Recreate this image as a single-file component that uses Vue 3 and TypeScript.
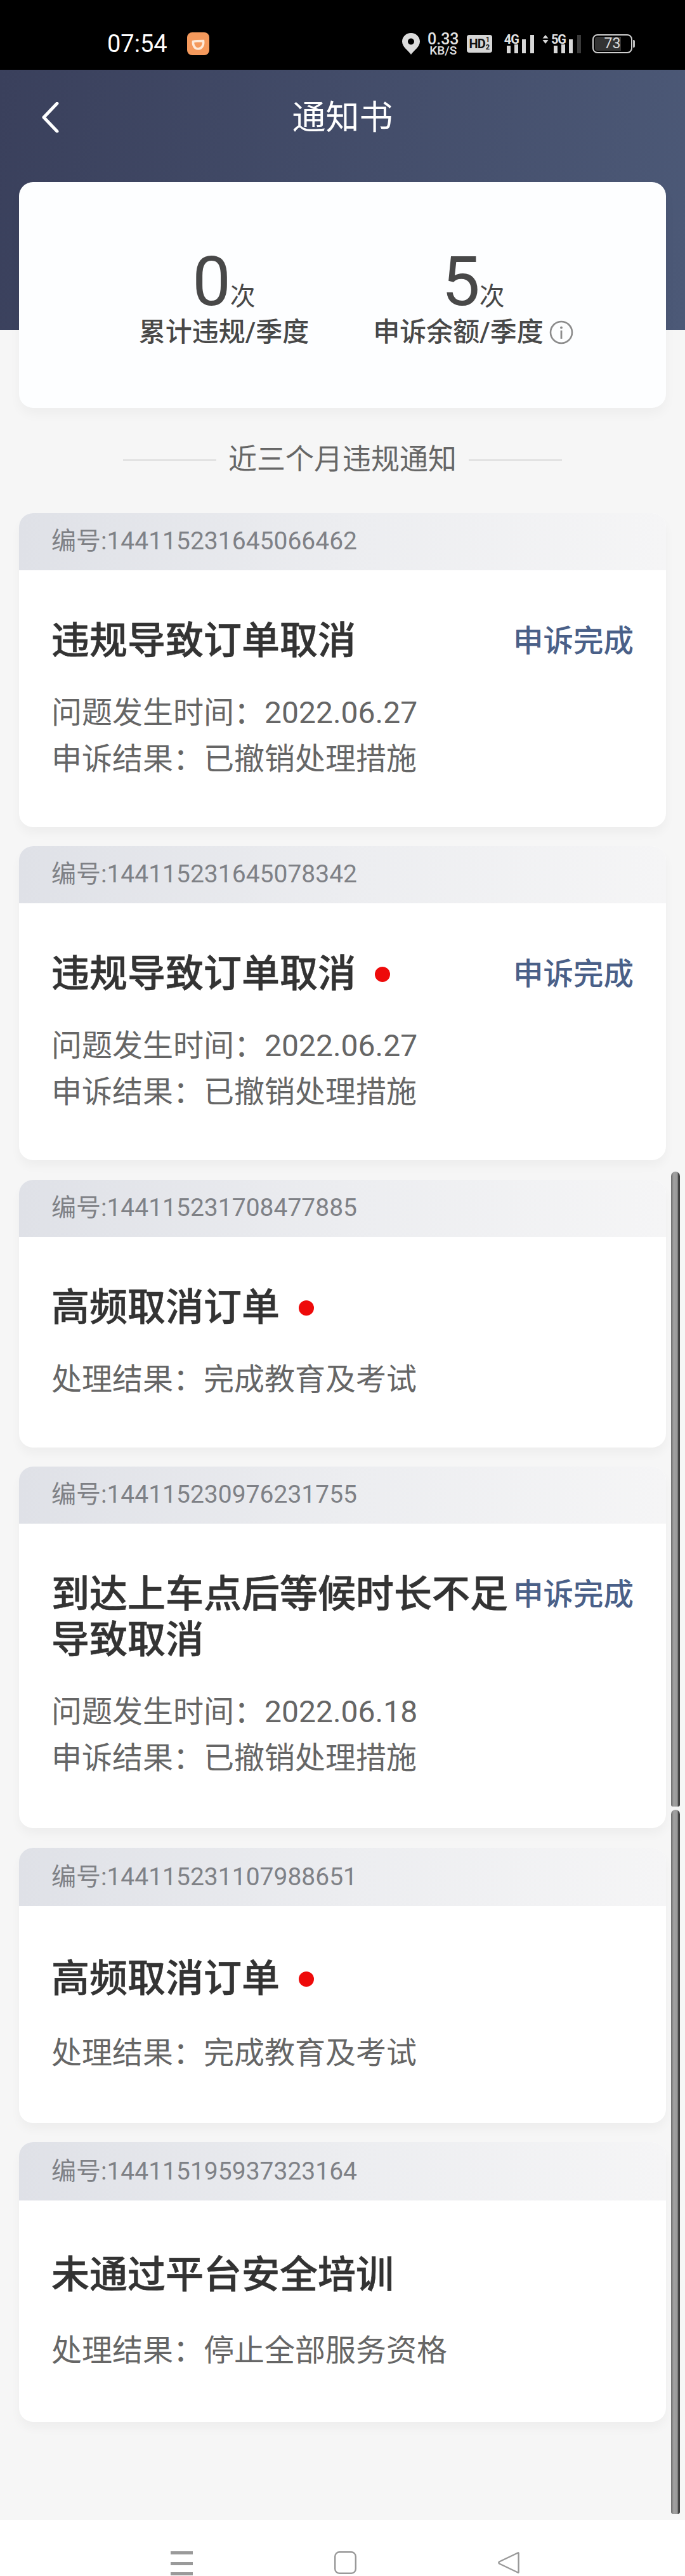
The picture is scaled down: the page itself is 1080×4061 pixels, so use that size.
<script setup lang="ts">
interface Notice {
  id: string
  title: string
  dot?: boolean
  status?: string
  lines: string[]
  variant?: string
}

const notices: Notice[] = [
  { id: '144115231645066462', title: '违规导致订单取消', status: '申诉完成', lines: ['问题发生时间：2022.06.27', '申诉结果：已撤销处理措施'] },
  { id: '144115231645078342', title: '违规导致订单取消', dot: true, status: '申诉完成', lines: ['问题发生时间：2022.06.27', '申诉结果：已撤销处理措施'] },
  { id: '144115231708477885', title: '高频取消订单', dot: true, lines: ['处理结果：完成教育及考试'] },
  { id: '144115230976231755', title: '到达上车点后等候时长不足导致取消', status: '申诉完成', lines: ['问题发生时间：2022.06.18', '申诉结果：已撤销处理措施'], variant: 'wrap' },
  { id: '144115231107988651', title: '高频取消订单', dot: true, lines: ['处理结果：完成教育及考试'], variant: 'loose' },
  { id: '144115195937323164', title: '未通过平台安全培训', lines: ['处理结果：停止全部服务资格'], variant: 'looser' },
]
</script>

<template>
  <div class="screen">
    <div class="statusbar">
      <span class="time">07:54</span>
      <svg class="app" viewBox="0 0 35 36">
        <rect width="35" height="36" rx="8" fill="#f4995c" />
        <path d="M9.5 14.5C14 13.5 21 13.5 25.5 13.5C26.5 20 23 26 17.5 26C12 26 8.8 20.5 9.5 14.5Z" fill="none" stroke="#fde9d8" stroke-width="3.6" />
      </svg>
      <div class="indicators">
        <svg class="pin" viewBox="0 0 28 34">
          <path fill-rule="evenodd" d="M14 34C10 28 0 22 0 13.5C0 6 6.2 0 14 0S28 6 28 13.5C28 22 18 28 14 34ZM14 8.5A5 5 0 1 0 14 18.5A5 5 0 1 0 14 8.5Z" fill="#dcdcdc" />
        </svg>
        <div class="speed">
          <span class="speed-num">0.33</span>
          <span class="speed-unit">KB/S</span>
        </div>
        <div class="hd">
          <span class="hd-label">HD</span>
          <span class="hd-sims"><i>1</i><i>2</i></span>
        </div>
        <div class="signal first">
          <span class="net">4G</span>
          <svg class="bars" viewBox="0 0 44 30">
            <rect x="0" y="18" width="6" height="12" fill="#d8d8d8" />
            <rect x="12" y="16" width="6" height="14" fill="#d8d8d8" />
            <rect x="24" y="8" width="6" height="22" fill="#d8d8d8" />
            <rect x="37" y="1" width="6" height="29" fill="#d8d8d8" />
          </svg>
        </div>
        <div class="signal second">
          <svg class="arrows" viewBox="0 0 10 14">
            <path d="M5 0L9.5 5.5H.5ZM5 14L.5 8H9.5Z" fill="#d8d8d8" />
          </svg>
          <span class="net">5G</span>
          <svg class="bars" viewBox="0 0 44 30">
            <rect x="0" y="18" width="6" height="12" fill="#d8d8d8" />
            <rect x="12" y="16" width="6" height="14" fill="#d8d8d8" />
            <rect x="24" y="8" width="6" height="22" fill="#d8d8d8" />
            <rect x="37" y="1" width="6" height="29" fill="#3a3a3a" />
          </svg>
        </div>
        <div class="battery">
          <span class="battery-level">73</span>
        </div>
        <span class="battery-nub"></span>
      </div>
    </div>

    <header class="hero">
      <div class="nav">
        <svg class="back" viewBox="0 0 28 48">
          <path d="M25 2L4 24L25 46" fill="none" stroke="#fff" stroke-width="5" stroke-linecap="round" stroke-linejoin="round" />
        </svg>
        <span class="nav-title">通知书</span>
      </div>
    </header>

    <main class="content">
      <section class="stats">
        <div class="stat">
          <div class="value"><span class="num">0</span><span class="unit">次</span></div>
          <div class="label">累计违规/季度</div>
        </div>
        <div class="stat second-stat">
          <div class="value"><span class="num">5</span><span class="unit">次</span></div>
          <div class="label">
            申诉余额/季度
            <svg class="info" viewBox="0 0 38 38">
              <circle cx="19" cy="19" r="17" fill="none" stroke="#8c8c8c" stroke-width="2.6" />
              <circle cx="19" cy="11.5" r="2" fill="#8c8c8c" />
              <rect x="17.6" y="16" width="2.8" height="13" fill="#8c8c8c" />
            </svg>
          </div>
        </div>
      </section>

      <div class="divider">
        <span class="rule"></span>
        <span class="divider-text">近三个月违规通知</span>
        <span class="rule"></span>
      </div>

      <div class="list">
        <article v-for="n in notices" :key="n.id" class="card" :class="n.variant">
          <div class="card-head">编号:{{ n.id }}</div>
          <div class="card-body">
            <div class="title-row">
              <h2 class="title">{{ n.title }}<i v-if="n.dot" class="dot"></i></h2>
              <span v-if="n.status" class="status">{{ n.status }}</span>
            </div>
            <p v-for="line in n.lines" :key="line" class="line">{{ line }}</p>
          </div>
        </article>
      </div>
    </main>

    <footer class="sysnav">
      <svg class="nav-menu" viewBox="0 0 35 40">
        <rect y="0" width="35" height="5" fill="#9a9a9a" />
        <rect y="17" width="35" height="5" fill="#9a9a9a" />
        <rect y="33" width="35" height="5" fill="#9a9a9a" />
      </svg>
      <svg class="nav-home" viewBox="0 0 35 36">
        <rect x="1.2" y="1.2" width="32.6" height="33.6" rx="7" fill="none" stroke="#999" stroke-width="2.4" />
      </svg>
      <svg class="nav-return" viewBox="0 0 34 36">
        <path d="M31.5 2.5C32 2 32.6 2.2 32.6 3V33C32.6 33.8 32 34 31.5 33.5L2.2 19.5C1 18.6 1 17.4 2.2 16.5Z" fill="none" stroke="#999" stroke-width="2.4" stroke-linejoin="round" />
      </svg>
    </footer>

    <span class="scroll scroll-a"></span>
    <span class="scroll scroll-b"></span>
  </div>
</template>

<style>
html,
body {
  margin: 0;
  background: #f6f6f6;
}
</style>

<style scoped>
.screen {
  position: relative;
  display: flex;
  flex-direction: column;
  width: 1080px;
  height: 4061px;
  overflow: hidden;
  background: #f6f6f6;
  font-family: Roboto, "Noto Sans CJK SC", sans-serif;
}

.statusbar {
  display: flex;
  align-items: center;
  flex: none;
  height: 110px;
  box-sizing: border-box;
  padding: 0 79px 0 169px;
  background: #000;
  color: #fff;
}
.time {
  font-size: 38px;
  line-height: 40px;
  margin-top: 28px;
}
.app {
  width: 35px;
  height: 36px;
  margin: 28px 0 0 31px;
}
.indicators {
  display: flex;
  align-items: center;
  height: 34px;
  margin: 28px 0 0 auto;
  color: #e2e2e2;
}
.pin {
  width: 28px;
  height: 34px;
}
.speed {
  display: flex;
  flex-direction: column;
  align-items: center;
  width: 48px;
  margin-left: 13px;
}
.speed-num {
  font-size: 25px;
  line-height: 21px;
  font-weight: 500;
  white-space: nowrap;
}
.speed-unit {
  font-size: 19px;
  line-height: 16px;
  font-weight: 500;
  white-space: nowrap;
}
.hd {
  display: flex;
  align-items: center;
  justify-content: center;
  width: 40px;
  height: 28px;
  margin-left: 13px;
  border-radius: 4px;
  background: #d6d6d6;
  color: #111;
}
.hd-label {
  font-size: 20px;
  font-weight: 700;
  letter-spacing: -1px;
  line-height: 28px;
}
.hd-sims {
  display: flex;
  flex-direction: column;
  margin-left: 1px;
}
.hd-sims i {
  font-style: normal;
  font-size: 11px;
  font-weight: 700;
  line-height: 12px;
}
.signal {
  position: relative;
  display: flex;
  align-items: flex-start;
  height: 30px;
}
.signal.first {
  margin-left: 19px;
}
.signal.second {
  margin-left: 12px;
}
.net {
  font-size: 20px;
  line-height: 16px;
  font-weight: 700;
  letter-spacing: -1px;
}
.arrows {
  width: 10px;
  height: 14px;
  margin: 1px 4px 0 0;
}
.bars {
  width: 44px;
  height: 30px;
  margin-left: -19px;
}
.battery {
  display: flex;
  align-items: center;
  justify-content: center;
  box-sizing: border-box;
  width: 63px;
  height: 30px;
  margin-left: 17px;
  border: 2px solid #cfcfcf;
  border-radius: 8px;
  background: linear-gradient(90deg, #333 0 73%, #000 73%);
  background-clip: content-box;
  padding: 2px;
}
.battery-level {
  font-size: 23px;
  line-height: 24px;
  color: #dcdcdc;
}
.battery-nub {
  width: 3px;
  height: 12px;
  margin-left: 1px;
  border-radius: 0 2px 2px 0;
  background: #bdbdbd;
}

.hero {
  flex: none;
  height: 410px;
  background: linear-gradient(100deg, #3a405c 0%, #4c5977 100%);
}
.nav {
  display: flex;
  align-items: center;
  justify-content: center;
  position: relative;
  height: 152px;
}
.back {
  position: absolute;
  left: 65px;
  top: 51px;
  width: 28px;
  height: 48px;
}
.nav-title {
  font-size: 53px;
  line-height: 60px;
  color: #fff;
}

.content {
  flex: 1;
  min-height: 0;
  box-sizing: border-box;
  padding: 0 30px;
}
.stats {
  position: relative;
  display: flex;
  align-items: flex-start;
  gap: 105px;
  box-sizing: border-box;
  height: 356px;
  margin-top: -233px;
  padding: 102px 0 0 190px;
  border-radius: 22px;
  background: #fdfeff;
  box-shadow: 0 10px 18px rgba(0, 0, 0, 0.035);
}
.stat {
  display: flex;
  flex-direction: column;
  align-items: center;
  width: 266px;
}
.second-stat {
  width: 310px;
}
.value {
  display: flex;
  align-items: baseline;
  height: 110px;
  color: #484848;
}
.num {
  font-size: 108px;
  line-height: 110px;
}
.unit {
  font-size: 40px;
  line-height: 110px;
  margin-left: -1px;
}
.label {
  display: flex;
  align-items: center;
  font-size: 42px;
  line-height: 50px;
  font-weight: 500;
  color: #484848;
  white-space: nowrap;
}
.info {
  width: 38px;
  height: 38px;
  margin-left: 9px;
}

.divider {
  display: flex;
  align-items: center;
  justify-content: center;
  gap: 19px;
  height: 60px;
  margin-top: 52px;
}
.divider-text {
  font-size: 45px;
  line-height: 60px;
  color: #666;
}
.rule {
  width: 147px;
  height: 3px;
  background: #e2e2e2;
}

.list {
  display: flex;
  flex-direction: column;
  gap: 30.4px;
  margin-top: 54px;
}
.card {
  border-radius: 22px;
  background: #fff;
  box-shadow: 0 10px 16px rgba(0, 0, 0, 0.035);
  overflow: hidden;
}
.card-head {
  height: 90px;
  box-sizing: border-box;
  padding-left: 51px;
  background: linear-gradient(90deg, #dfe1e7 0%, #ecedf0 50%, #f5f5f6 100%);
  font-size: 39px;
  line-height: 88px;
  color: #7f8186;
}
.card-body {
  padding: 76px 51px 71px;
}
.title-row {
  display: flex;
  align-items: flex-start;
  margin-bottom: 40px;
}
.title {
  flex: 1;
  min-width: 0;
  margin: 0;
  font-size: 60px;
  line-height: 72px;
  font-weight: 500;
  color: #333;
  -webkit-text-stroke: 0.6px #333;
}
.dot {
  display: inline-block;
  width: 24px;
  height: 24px;
  margin-left: 30px;
  border-radius: 50%;
  background: #ee0a0a;
  vertical-align: 8px;
}
.status {
  flex: none;
  font-size: 47.5px;
  line-height: 72px;
  font-weight: 500;
  color: #4a6088;
}
.line {
  margin: 0;
  font-size: 48px;
  line-height: 73px;
  color: #666;
  white-space: nowrap;
}

.wrap .card-body {
  padding-bottom: 74px;
}
.loose .card-head,
.looser .card-head {
  height: 92px;
  line-height: 92px;
}
.loose .card-body {
  padding: 79px 51px 74px;
}
.loose .title-row {
  margin-bottom: 44px;
}
.looser .card-body {
  padding: 82px 51px 76px;
}
.looser .title-row {
  margin-bottom: 46px;
}

.sysnav {
  display: flex;
  align-items: flex-start;
  flex: none;
  height: 88px;
  box-sizing: border-box;
  padding: 49px 0 0 269px;
  background: #fff;
}
.nav-menu {
  width: 35px;
  height: 40px;
}
.nav-home {
  width: 35px;
  height: 36px;
  margin-left: 223px;
}
.nav-return {
  width: 34px;
  height: 36px;
  margin-left: 223px;
}

.scroll {
  position: absolute;
  left: 1058px;
  width: 14px;
  border-radius: 7px 7px 3px 3px;
  background: linear-gradient(90deg, #6c6c6c 0%, #a2a2a2 30%, #999 70%, #222 90%, #555 100%);
}
.scroll-a {
  top: 1847px;
  height: 1001px;
}
.scroll-b {
  top: 2853px;
  height: 1110px;
}
</style>
